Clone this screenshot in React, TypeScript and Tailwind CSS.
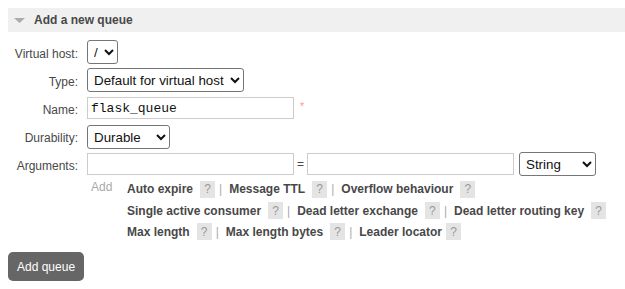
import React from "react";

const Help = () => (
  <span className="inline-flex h-[17px] w-[15px] items-center justify-center bg-[#e4e4e4] text-[12px] font-normal text-[#999]">
    ?
  </span>
);

const Sep = () => <span className="ml-[4px] mr-[7px] font-normal text-[#aaa]">|</span>;

const Item = ({ label, last, tight }: { label: string; last?: boolean; tight?: boolean }) => (
  <span className="inline-flex items-center">
    <span className="font-bold text-[#484848]">{label}</span>
    <span className={tight ? "ml-[4px]" : "ml-[7px]"}>
      <Help />
    </span>
    {!last && <Sep />}
  </span>
);

const selectCls =
  "h-[24px] rounded-[3px] border border-[#767676] bg-white pl-[2px] pr-[3px] text-[13.333px] text-[#111] font-['Liberation_Sans',Arial,sans-serif]";
const inputCls =
  "h-[22px] w-[207px] border border-[#ccc] bg-white px-[3px] text-[13px] text-[#111] font-['Liberation_Mono',monospace]";

const Label = ({ children }: { children: React.ReactNode }) => (
  <div className="flex h-[28px] items-center justify-end pt-[3px]">{children}</div>
);

export default function App() {
  return (
    <div className="h-[289px] w-[625px] overflow-hidden bg-white font-['Liberation_Sans',Arial,sans-serif] text-[12px] text-[#484848]">
      <div className="pt-[8px] pl-[8px]">
        <div className="flex h-[24px] items-center bg-[#f0f0f0]">
          <svg width="11" height="5" viewBox="0 0 11 5" className="ml-[6px]">
            <polygon points="0,0 11,0 5.5,5" fill="#aaa" />
          </svg>
          <span className="ml-[9px] font-bold text-[#484848]">Add a new queue</span>
        </div>
      </div>

      <div className="mt-[6px] pl-[8px]">
        <div className="grid grid-cols-[70px_1fr] gap-x-[9px]">
          <Label>Virtual host:</Label>
          <div className="flex h-[28px] items-center">
            <select className={selectCls}>
              <option>/</option>
            </select>
          </div>

          <Label>Type:</Label>
          <div className="flex h-[28px] items-center">
            <select className={selectCls}>
              <option>Default for virtual host</option>
              <option>Classic</option>
              <option>Quorum</option>
              <option>Stream</option>
            </select>
          </div>

          <Label>Name:</Label>
          <div className="flex h-[28px] items-center">
            <input className={inputCls} defaultValue="flask_queue" />
            <span className="ml-[6px] -mt-[3px] text-[11px] text-[#f99]">*</span>
          </div>

          <Label>Durability:</Label>
          <div className="flex h-[28px] items-center pt-[2px]">
            <select className={selectCls}>
              <option>Durable</option>
              <option>Transient</option>
            </select>
          </div>

          <Label>Arguments:</Label>
          <div className="flex h-[28px] items-center">
            <input className={inputCls} />
            <span className="w-[13px] text-center">=</span>
            <input className={inputCls} />
            <select className={`${selectCls} ml-[5px] w-[77px]`}>
              <option>String</option>
              <option>Number</option>
              <option>Boolean</option>
              <option>List</option>
            </select>
          </div>

          <div />
          <div className="flex">
            <div className="w-[40px] pl-[4px] text-[#aaa]">Add</div>
            <div className="flex flex-col">
              <div className="flex h-[22px] items-center">
                <Item label="Auto expire" />
                <Item label="Message TTL" />
                <Item label="Overflow behaviour" last />
              </div>
              <div className="flex h-[21px] items-center">
                <Item label="Single active consumer" />
                <Item label="Dead letter exchange" />
                <Item label="Dead letter routing key" last />
              </div>
              <div className="flex h-[21px] items-center">
                <Item label="Max length" />
                <Item label="Max length bytes" />
                <Item label="Leader locator" last tight />
              </div>
            </div>
          </div>
        </div>

        <button className="mt-[10px] flex h-[29px] items-center rounded-[5px] bg-[#666] px-[9px] text-[12px] text-white">
          Add queue
        </button>
      </div>
    </div>
  );
}
